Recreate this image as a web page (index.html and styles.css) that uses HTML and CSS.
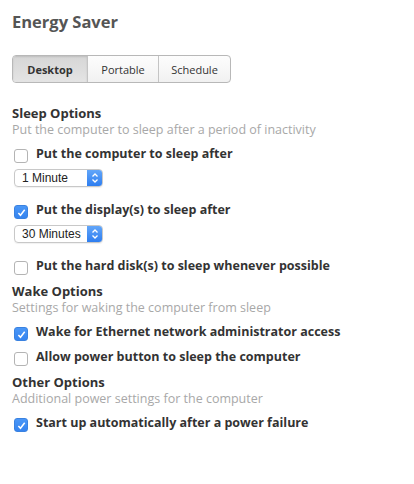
FILE: index.html
```html
<!DOCTYPE html>
<html lang="en">
<head>
  <meta charset="UTF-8"><title>Energy Saver</title>
  <meta name="viewport" content="width=device-width,initial-scale=1">
  <link rel="stylesheet" href="styles.css">
</head>
<body>
  <div class="pane">
    <h1>Energy Saver</h1>

    <div class="tabs">
      <button class="tab active">Desktop</button>
      <button class="tab">Portable</button>
      <button class="tab">Schedule</button>
    </div>

    <!-- Sleep -->
    <section class="group">
      <h2>Sleep Options</h2>
      <p class="hint">Put the computer to sleep after a period of inactivity</p>
      <label class="opt"><span class="box"></span>Put the computer to sleep after</label>
      <div class="select"><span>1 Minute</span><i class="arrows"><svg width="8" height="12" viewBox="0 0 8 12"><path d="M1.5 4.5 4 2 6.5 4.5M1.5 7.5 4 10 6.5 7.5" fill="none" stroke="#fff" stroke-width="1.3"/></svg></i></div>
      <label class="opt"><span class="box on"><svg width="11" height="11" viewBox="0 0 11 11"><path d="M2.4 5.9 4.5 8.3 8.7 2.7" fill="none" stroke="#fff" stroke-width="1.5"/></svg></span>Put the display(s) to sleep after</label>
      <div class="select"><span>30 Minutes</span><i class="arrows"><svg width="8" height="12" viewBox="0 0 8 12"><path d="M1.5 4.5 4 2 6.5 4.5M1.5 7.5 4 10 6.5 7.5" fill="none" stroke="#fff" stroke-width="1.3"/></svg></i></div>
      <label class="opt"><span class="box"></span>Put the hard disk(s) to sleep whenever possible</label>
    </section>

    <!-- Wake -->
    <section class="group">
      <h2>Wake Options</h2>
      <p class="hint">Settings for waking the computer from sleep</p>
      <label class="opt"><span class="box on"><svg width="11" height="11" viewBox="0 0 11 11"><path d="M2.4 5.9 4.5 8.3 8.7 2.7" fill="none" stroke="#fff" stroke-width="1.5"/></svg></span>Wake for Ethernet network administrator access</label>
      <label class="opt"><span class="box"></span>Allow power button to sleep the computer</label>
    </section>

    <!-- Other -->
    <section class="group">
      <h2>Other Options</h2>
      <p class="hint">Additional power settings for the computer</p>
      <label class="opt"><span class="box on"><svg width="11" height="11" viewBox="0 0 11 11"><path d="M2.4 5.9 4.5 8.3 8.7 2.7" fill="none" stroke="#fff" stroke-width="1.5"/></svg></span>Start up automatically after a power failure</label>
    </section>
  </div>
</body>
</html>
```

FILE: styles.css
```css
* { margin:0; padding:0; box-sizing:border-box }
body { font-family:'Open Sans','DejaVu Sans',sans-serif; background:#fff; color:#333; }

.pane { padding:12px 12px; }
h1 { font-size:16.5px; font-weight:bold; color:#555; line-height:20px; margin-bottom:23px; }

/* Segmented tabs */
.tabs { display:flex; width:219px; height:28px; border:1px solid #b8b8b8; border-radius:4px; overflow:hidden;
  background:linear-gradient(#fdfdfd,#f1f1f1); margin-bottom:22px;
}
.tab { border:none; background:none; font-family:inherit; font-size:11px; color:#333; flex:none; }
.tab:nth-child(1) { width:74px; }
.tab:nth-child(2) { width:71px; border-left:1px solid #c4c4c4; }
.tab:nth-child(3) { flex:1; border-left:1px solid #c4c4c4; }
.tab.active { background:linear-gradient(#d6d6d6,#e4e4e4); font-weight:bold; box-shadow:inset 0 1px 2px rgba(0,0,0,.12); }

/* Option groups */
.group h2 { font-size:13px; font-weight:bold; color:#333; line-height:17px; }
.hint { font-size:12.5px; color:#a8a8a8; line-height:16px; margin-bottom:7px; }
.group + .group { margin-top:8px; }

.opt { display:flex; align-items:flex-start; gap:8px; height:18px; font-size:12.5px; font-weight:bold; color:#333;
  line-height:18px; padding-left:2px;
}
.opt + .opt { margin-top:7px; }
.box { width:14px; height:14px; margin-top:4px; border:1px solid #b4b4b4; border-radius:3px; background:#fff; flex:none;
  display:flex; align-items:center; justify-content:center;
}
.box.on { background:linear-gradient(#4a97f7,#3584f0); border-color:#3a82e0; }

.select { display:flex; width:89px; height:18px; margin:6px 0 14px 2px; border:1px solid #c8c8c8; border-radius:4px;
  overflow:hidden; font-family:'Liberation Sans',Arial,sans-serif; font-size:12px; color:#222;
  box-shadow:0 1px 1px rgba(0,0,0,.06);
}
.select span { flex:1; padding-left:7px; line-height:16px; }
.arrows { width:15px; background:linear-gradient(#62a6f9,#2e7ef0); display:flex; align-items:center; justify-content:center; }
```
